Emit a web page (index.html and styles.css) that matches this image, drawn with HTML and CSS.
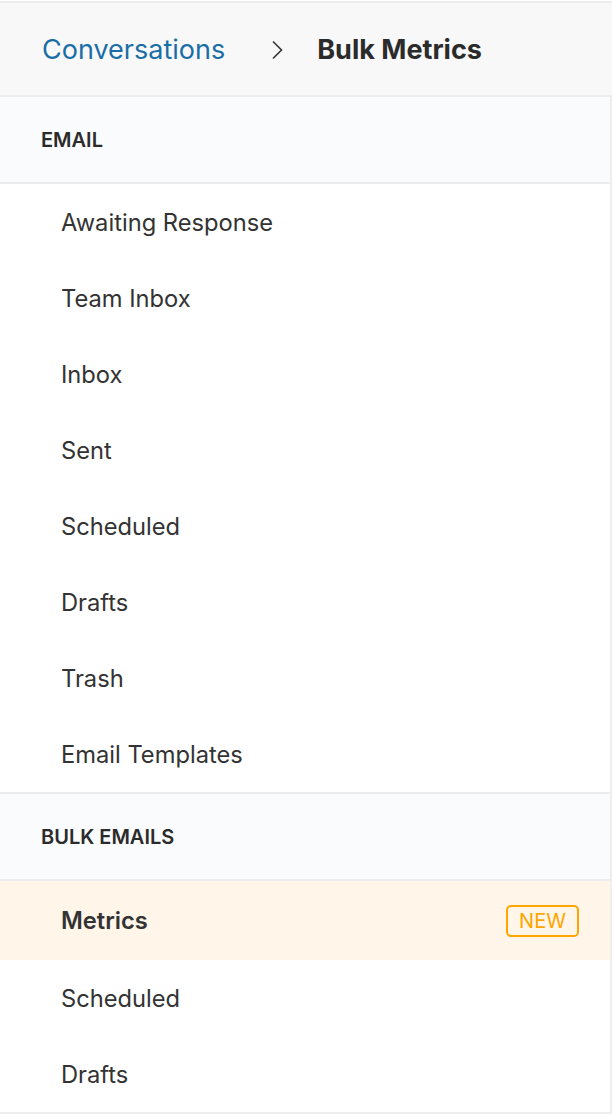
FILE: index.html
```html
<!DOCTYPE html>
<html>
	<head>
		<meta charset="utf-8" />
		<meta name="viewport" content="width=device-width, initial-scale=1.0" />
		<title>Bulk Metrics</title>
		<link rel="stylesheet" href="styles.css">
	</head>
	<body class="main">
        <nav class="breadcrumb">
            <a class="crumb-link" href="#">Conversations</a>
            <svg class="crumb-sep" width="14" height="20" viewBox="0 0 14 20">
                <path d="M3 1.5 L11.5 10 L3 18.5" fill="none" stroke="#333" stroke-width="1.6" />
            </svg>
            <span class="crumb-current">Bulk Metrics</span>
        </nav>
        <aside class="sidebar">
            <section class="group">
                <h3 class="group-title">EMAIL</h3>
                <ul class="group-list">
                    <li class="item">Awaiting Response</li>
                    <li class="item">Team Inbox</li>
                    <li class="item">Inbox</li>
                    <li class="item">Sent</li>
                    <li class="item">Scheduled</li>
                    <li class="item">Drafts</li>
                    <li class="item">Trash</li>
                    <li class="item">Email Templates</li>
                </ul>
            </section>
            <section class="group">
                <h3 class="group-title">BULK EMAILS</h3>
                <ul class="group-list">
                    <li class="item active">
                        <span>Metrics</span>
                        <span class="badge">NEW</span>
                    </li>
                    <li class="item">Scheduled</li>
                    <li class="item">Drafts</li>
                </ul>
            </section>
        </aside>
	</body>
</html>
```

FILE: styles.css
```css
:root {
    --font-family: "Inter", "Liberation Sans", Arial, sans-serif;
    --line: #ececec;
    --text: #333;
}

body {
    margin: 0;
    padding: 0;
    font-family: var(--font-family);
    color: var(--text);
    background-color: #fff;
}

.main {
    display: flex;
    flex-direction: column;
    width: 612px;
    height: 1116px;
    overflow: hidden;
}

.breadcrumb {
    display: flex;
    flex-direction: row;
    align-items: center;
    height: 92px;
    margin-top: 1px;
    padding-left: 42px;
    background-color: #f8f8f8;
    border-top: 2px solid var(--line);
    border-bottom: 2px solid var(--line);
    flex-shrink: 0;
}

.crumb-link {
    color: #1a6ea6;
    text-decoration: none;
    font-size: 27px;
}

.crumb-sep {
    margin: 2px 33px 0 45px;
}

.crumb-current {
    font-size: 27px;
    font-weight: 700;
    color: #2b2b2b;
}

.sidebar {
    display: flex;
    flex-direction: column;
    border-right: 2px solid #eee;
    border-bottom: 2px solid #eee;
}

.group-title {
    margin: 0;
    height: 85px;
    display: flex;
    align-items: center;
    padding-left: 41px;
    font-size: 20px;
    font-weight: 600;
    background-color: #fafbfd;
    border-bottom: 2px solid var(--line);
    color: #2b2b2b;
}

.group + .group .group-title {
    border-top: 2px solid var(--line);
}

.group-list {
    list-style: none;
    margin: 0;
    padding: 0;
}

.item {
    display: flex;
    align-items: center;
    justify-content: space-between;
    height: 76px;
    padding: 0 31px 0 61px;
    font-size: 23.7px;
}

.item.active {
    height: 79px;
    background-color: #fff6e9;
    font-weight: 600;
}

.badge {
    display: inline-block;
    box-sizing: border-box;
    width: 73px;
    height: 32px;
    line-height: 28px;
    text-align: center;
    border: 2px solid #ffa500;
    border-radius: 5px;
    color: #ffa500;
    font-size: 20px;
    font-weight: 400;
}
```
